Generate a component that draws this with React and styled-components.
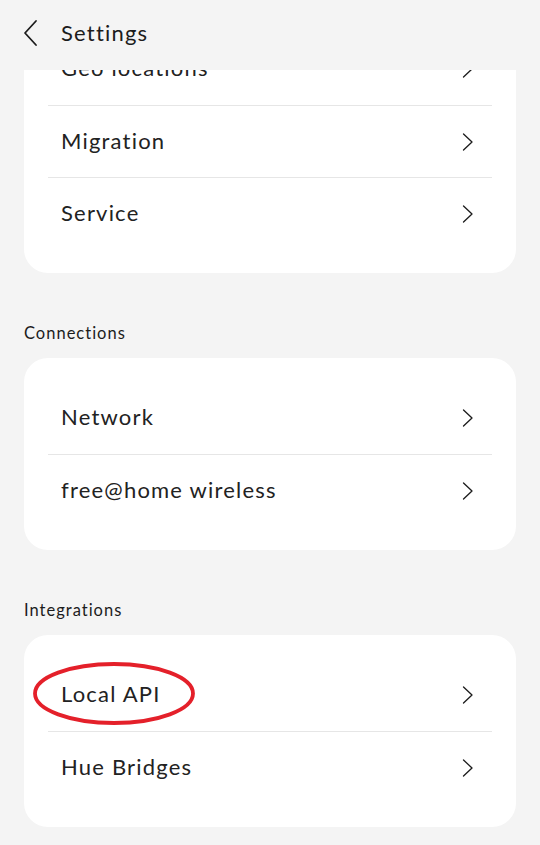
import React from "react";
import styled, { createGlobalStyle } from "styled-components";

const Global = createGlobalStyle`
  html, body { margin: 0; padding: 0; background: #f4f4f4; }
  body { font-family: "Lato", "Noto Sans", sans-serif; color: #1c1c1c; }
  * { box-sizing: border-box; }
`;

const Page = styled.div`
  width: 540px;
  height: 845px;
  background: #f4f4f4;
  padding: 9px 24px 24px;
  overflow: hidden;
`;

const Header = styled.header`
  position: fixed;
  top: 0;
  left: 0;
  width: 540px;
  height: 70px;
  background: #f4f4f4;
  display: flex;
  align-items: center;
  padding: 0 0 5px 18px;
  gap: 19px;
  z-index: 5;
`;

const BackButton = styled.button`
  border: 0;
  background: none;
  padding: 0;
  width: 24px;
  height: 28px;
  display: flex;
  align-items: center;
  justify-content: center;
  color: #1c1c1c;
`;

const Title = styled.h1`
  margin: 0;
  font-size: 22px;
  font-weight: 400;
  letter-spacing: 1.2px;
`;

const Section = styled.section`
  display: flex;
  flex-direction: column;
`;

const SectionLabel = styled.div`
  font-size: 16.5px;
  height: 20px;
  line-height: 20px;
  letter-spacing: 1px;
  margin: 50px 0 15px;
`;

const Card = styled.div`
  background: #ffffff;
  border-radius: 24px;
  padding: 24px 24px;
  display: flex;
  flex-direction: column;
`;

const Row = styled.div`
  position: relative;
  height: 72px;
  display: flex;
  align-items: center;
  justify-content: space-between;
  padding: 0 18px 3px 13px;
  & + & {
    border-top: 1px solid #e6e6e6;
  }
`;

const RowLabel = styled.span`
  font-size: 22px;
  letter-spacing: 1.2px;
  font-weight: 400;
  color: #222;
`;

const ChevronIcon = styled.svg`
  margin-top: 3px;
`;

const Annotation = styled.svg`
  position: absolute;
  left: -16px;
  top: 3px;
  pointer-events: none;
  overflow: visible;
`;

const Chevron = () => (
  <ChevronIcon width="12" height="18" viewBox="0 0 12 18" fill="none">
    <path d="M1.5 1 L10 9 L1.5 17" stroke="#1c1c1c" strokeWidth="1.3" strokeLinecap="round" strokeLinejoin="round" />
  </ChevronIcon>
);

const BackChevron = () => (
  <svg width="18" height="28" viewBox="0 0 18 28" fill="none">
    <path d="M15 2 L4 14 L15 26" stroke="#1c1c1c" strokeWidth="1.8" strokeLinecap="round" strokeLinejoin="round" />
  </svg>
);

const Item = ({ label, circled }) => (
  <Row>
    {circled && (
      <Annotation width="164" height="64" viewBox="0 0 164 64">
        <ellipse cx="82" cy="31.5" rx="79" ry="29.5" stroke="#e4202a" strokeWidth="3.8" fill="none" />
      </Annotation>
    )}
    <RowLabel>{label}</RowLabel>
    <Chevron />
  </Row>
);

const sections = [
  { label: null, items: ["Geo locations", "Migration", "Service"] },
  { label: "Connections", items: ["Network", "free@home wireless"] },
  { label: "Integrations", items: ["Local API", "Hue Bridges"] },
];

export default function App() {
  return (
    <>
      <Global />
      <Header>
        <BackButton aria-label="Back">
          <BackChevron />
        </BackButton>
        <Title>Settings</Title>
      </Header>
      <Page>
        {sections.map((s, i) => (
          <Section key={i}>
            {s.label && <SectionLabel>{s.label}</SectionLabel>}
            <Card>
              {s.items.map((it) => (
                <Item key={it} label={it} circled={it === "Local API"} />
              ))}
            </Card>
          </Section>
        ))}
      </Page>
    </>
  );
}
